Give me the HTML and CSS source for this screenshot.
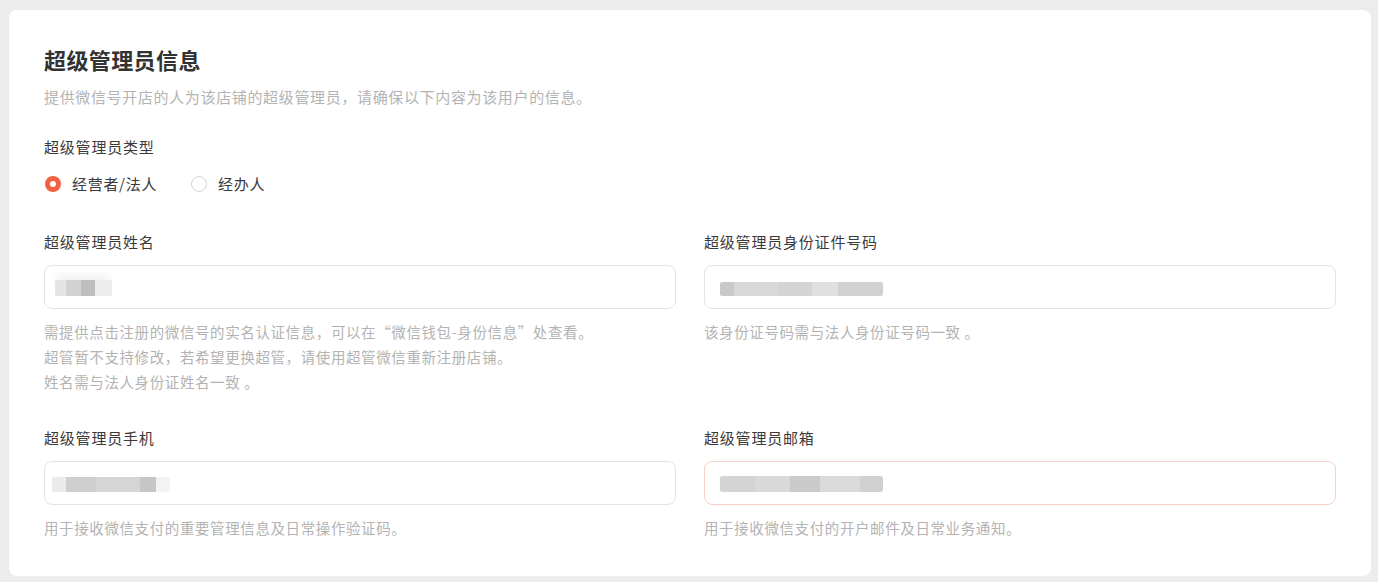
FILE: index.html
```html
<!DOCTYPE html>
<html lang="zh-CN">
<head>
<meta charset="utf-8">
<title>超级管理员信息</title>
<link rel="stylesheet" href="styles.css">
</head>
<body>
<div class="card">
  <h2 class="title">超级管理员信息</h2>
  <p class="subtitle">提供微信号开店的人为该店铺的超级管理员，请确保以下内容为该用户的信息。</p>

  <div class="type-label">超级管理员类型</div>
  <div class="radios">
    <label class="radio"><span class="dot checked"></span><span>经营者/法人</span></label>
    <label class="radio"><span class="dot"></span><span>经办人</span></label>
  </div>

  <div class="grid">
    <div class="field">
      <div class="label">超级管理员姓名</div>
      <div class="input"><span class="blur blur-name"></span></div>
      <div class="help">
        <div>需提供点击注册的微信号的实名认证信息，可以在“微信钱包-身份信息”处查看。</div>
        <div>超管暂不支持修改，若希望更换超管，请使用超管微信重新注册店铺。</div>
        <div>姓名需与法人身份证姓名一致 。</div>
      </div>
    </div>
    <div class="field">
      <div class="label">超级管理员身份证件号码</div>
      <div class="input"><span class="blur blur-id"></span></div>
      <div class="help">
        <div>该身份证号码需与法人身份证号码一致 。</div>
      </div>
    </div>
    <div class="field">
      <div class="label">超级管理员手机</div>
      <div class="input"><span class="blur blur-phone"></span></div>
      <div class="help">
        <div>用于接收微信支付的重要管理信息及日常操作验证码。</div>
      </div>
    </div>
    <div class="field">
      <div class="label">超级管理员邮箱</div>
      <div class="input input-error"><span class="blur blur-email"></span></div>
      <div class="help">
        <div>用于接收微信支付的开户邮件及日常业务通知。</div>
      </div>
    </div>
  </div>
</div>
</body>
</html>
```

FILE: styles.css
```css
* { box-sizing: border-box; }

html, body {
  margin: 0;
  padding: 0;
  background: #ececec;
}

body {
  padding: 10px 7px 0 9px;
  font-family: "Noto Sans CJK SC", "Noto Sans", sans-serif;
  color: #333;
}

.card {
  background: #fff;
  border-radius: 8px;
  padding: 34px 35px 35px 35px;
  height: 566px;
}

.title {
  margin: 0;
  font-size: 22px;
  line-height: 30px;
  font-weight: 700;
  color: #333;
  letter-spacing: 0.4px;
}

.subtitle {
  margin: 12px 0 0;
  font-size: 15px;
  line-height: 22px;
  color: #b3b3b3;
  letter-spacing: 0.65px;
}

.type-label,
.label {
  font-size: 15px;
  line-height: 22px;
  color: #3a3a3a;
  letter-spacing: 0.8px;
}

.type-label {
  margin-top: 28px;
}

.radios {
  display: flex;
  gap: 33px;
  margin-top: 15px;
  height: 22px;
  align-items: center;
}

.radio {
  display: flex;
  align-items: center;
  gap: 11px;
  font-size: 15px;
  line-height: 22px;
  color: #3a3a3a;
  letter-spacing: 0.7px;
}

.dot {
  width: 16px;
  height: 16px;
  border-radius: 50%;
  border: 1px solid #d4d4d4;
  background: #fff;
  margin-left: 1px;
}

.dot.checked {
  border: 5px solid #f2603d;
}

.grid {
  display: grid;
  grid-template-columns: 1fr 1fr;
  column-gap: 28px;
  row-gap: 33px;
  margin-top: 36px;
}

.input {
  margin-top: 12px;
  height: 44px;
  border: 1px solid #e4e4e4;
  border-radius: 8px;
  display: flex;
  align-items: center;
}

.input-error {
  border-color: #f6d0c8;
}

.help {
  margin-top: 10px;
  font-size: 14.5px;
  line-height: 25px;
  color: #b3b3b3;
  letter-spacing: 0.6px;
}

.blur {
  display: block;
  height: 16px;
  border-radius: 2px;
}

.blur-name {
  width: 57px;
  margin-left: 10px;
  margin-top: 1px;
  background: linear-gradient(to right,
    #e4e4e4 0, #e4e4e4 11px,
    #d2d2d2 11px, #d2d2d2 26px,
    #bfbfbf 26px, #bfbfbf 40px,
    #ececec 40px, #ececec 57px);
  box-shadow: 0 -8px 6px -2px #f4f4f4;
}

.blur-id {
  width: 163px;
  margin-left: 15px;
  height: 14px;
  margin-top: 3px;
  background: linear-gradient(to right,
    #c9c9c9 0, #c9c9c9 14px,
    #d9d9d9 14px, #d9d9d9 58px,
    #d4d4d4 58px, #d4d4d4 92px,
    #e0e0e0 92px, #e0e0e0 118px,
    #d2d2d2 118px, #d2d2d2 163px);
}

.blur-phone {
  width: 118px;
  margin-left: 7px;
  height: 15px;
  margin-top: 3px;
  background: linear-gradient(to right,
    #ebebeb 0, #ebebeb 14px,
    #cfcfcf 14px, #cfcfcf 44px,
    #d5d5d5 44px, #d5d5d5 88px,
    #c6c6c6 88px, #c6c6c6 104px,
    #f3f3f3 104px, #f3f3f3 118px);
}

.blur-email {
  width: 163px;
  margin-left: 15px;
  height: 16px;
  margin-top: 2px;
  background: linear-gradient(to right,
    #d4d4d4 0, #d4d4d4 35px,
    #d9d9d9 35px, #d9d9d9 70px,
    #cacaca 70px, #cacaca 100px,
    #dadada 100px, #dadada 140px,
    #d0d0d0 140px, #d0d0d0 163px);
}
```
